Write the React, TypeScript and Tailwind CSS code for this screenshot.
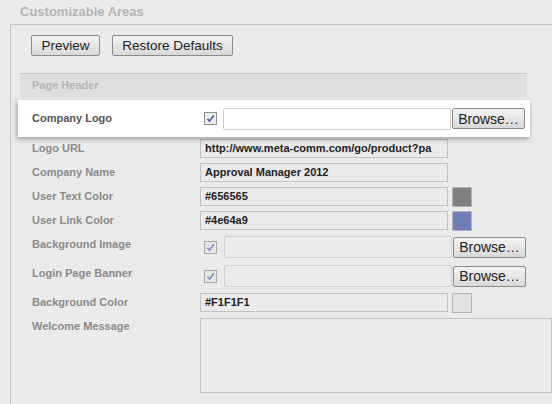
import type { ReactNode } from 'react'

function Check({ dim }: { dim?: boolean }) {
  return (
    <span
      className={`flex h-[13px] w-[13px] items-center justify-center border ${
        dim ? 'border-[#a8a8a8] bg-[#e6e6e6]' : 'border-[#8f8f8f] bg-[#ececec]'
      }`}
    >
      <svg width="9" height="9" viewBox="0 0 9 9">
        <path
          d="M1.5 4.8 L3.6 7.2 L7.8 1.2"
          fill="none"
          stroke={dim ? '#7f8cc0' : '#4a5ca8'}
          strokeWidth="1.6"
        />
      </svg>
    </span>
  )
}

function BrowseButton() {
  return (
    <button className="flex h-[21px] w-[73px] items-center justify-center rounded-[2px] border border-[#8a8a8a] bg-gradient-to-b from-[#f4f4f4] to-[#d9d9d9] text-[14px] leading-none text-[#222]">
      Browse…
    </button>
  )
}

function Label({ children, top }: { children: ReactNode; top?: boolean }) {
  return (
    <div
      className={`w-[189px] shrink-0 pl-[21px] text-[11px] font-bold leading-[13px] text-[#8a8a8a] ${
        top ? 'self-start pt-[2px]' : ''
      }`}
    >
      {children}
    </div>
  )
}

function TextRow({ label, value, mt, swatch }: { label: string; value: string; mt: string; swatch?: string }) {
  return (
    <div className={`flex h-[19px] items-center ${mt}`}>
      <Label>{label}</Label>
      <div className="flex h-[19px] w-[248px] items-center overflow-hidden whitespace-nowrap border border-[#c2c2c2] pl-[4px] text-[11px] font-bold text-[#222]">
        {value}
      </div>
      {swatch && <div className={`ml-[4px] h-[20px] w-[20px] border border-[#b4b4b4] ${swatch}`} />}
    </div>
  )
}

function FileRow({ label, mt }: { label: string; mt: string }) {
  return (
    <div className={`flex h-[22px] items-center ${mt}`}>
      <Label top>{label}</Label>
      <div className="ml-[4px] mr-[7px]">
        <Check dim />
      </div>
      <div className="h-[22px] w-[228px] rounded-[2px] border border-[#d2d2d2]" />
      <div className="ml-[1px]">
        <BrowseButton />
      </div>
    </div>
  )
}

export default function App() {
  return (
    <div className="h-[404px] w-[552px] overflow-hidden bg-[#ebebeb] font-['Liberation_Sans',Arial,sans-serif]">
      <div className="h-[24px] pl-[20px] pt-[4px] text-[13px] font-bold leading-[16px] text-[#b4b4b4]">
        Customizable Areas
      </div>
      <div className="ml-[10px] h-[380px] border-l border-t border-[#c4c4c4]">
        <div className="mt-[10px] flex gap-[12px] pl-[20px]">
          <button className="h-[21px] w-[69px] rounded-[2px] border border-[#8a8a8a] bg-gradient-to-b from-[#f4f4f4] to-[#d9d9d9] text-[13.5px] leading-none text-[#222]">
            Preview
          </button>
          <button className="h-[21px] w-[121px] rounded-[2px] border border-[#8a8a8a] bg-gradient-to-b from-[#f4f4f4] to-[#d9d9d9] text-[13.5px] leading-none text-[#222]">
            Restore Defaults
          </button>
        </div>

        <div className="ml-[9px] mt-[17px] flex h-[24px] w-[507px] items-center border-t border-[#c8c8c8] bg-[#dfdfdf] pl-[12px] text-[11px] font-bold text-[#b5b5b5]">
          Page Header
        </div>

        <div className="relative z-10 ml-[7px] mt-[3px] flex h-[37px] w-[512px] items-center bg-white shadow-[-1px_2px_5px_rgba(0,0,0,0.35)]">
          <div className="w-[186px] shrink-0 pl-[14px] text-[11px] font-bold leading-[13px] text-[#555]">
            Company Logo
          </div>
          <div className="mr-[6px]">
            <Check />
          </div>
          <div className="h-[22px] w-[228px] rounded-[2px] border border-[#cfcfcf] bg-white" />
          <div className="ml-[1px]">
            <BrowseButton />
          </div>
        </div>

        <TextRow label="Logo URL" value="http://www.meta-comm.com/go/product?pa" mt="mt-[2px]" />
        <TextRow label="Company Name" value="Approval Manager 2012" mt="mt-[5px]" />
        <TextRow label="User Text Color" value="#656565" mt="mt-[5px]" swatch="bg-[#808080]" />
        <TextRow label="User Link Color" value="#4e64a9" mt="mt-[5px]" swatch="bg-[#6f7fb5]" />
        <FileRow label="Background Image" mt="mt-[6px]" />
        <FileRow label="Login Page Banner" mt="mt-[7px]" />
        <TextRow label="Background Color" value="#F1F1F1" mt="mt-[6px]" swatch="bg-[#e3e3e3]" />

        <div className="mt-[6px] flex h-[75px]">
          <Label top>Welcome Message</Label>
          <div className="h-[75px] w-[400px] border border-[#c2c2c2]" />
        </div>
      </div>
    </div>
  )
}
